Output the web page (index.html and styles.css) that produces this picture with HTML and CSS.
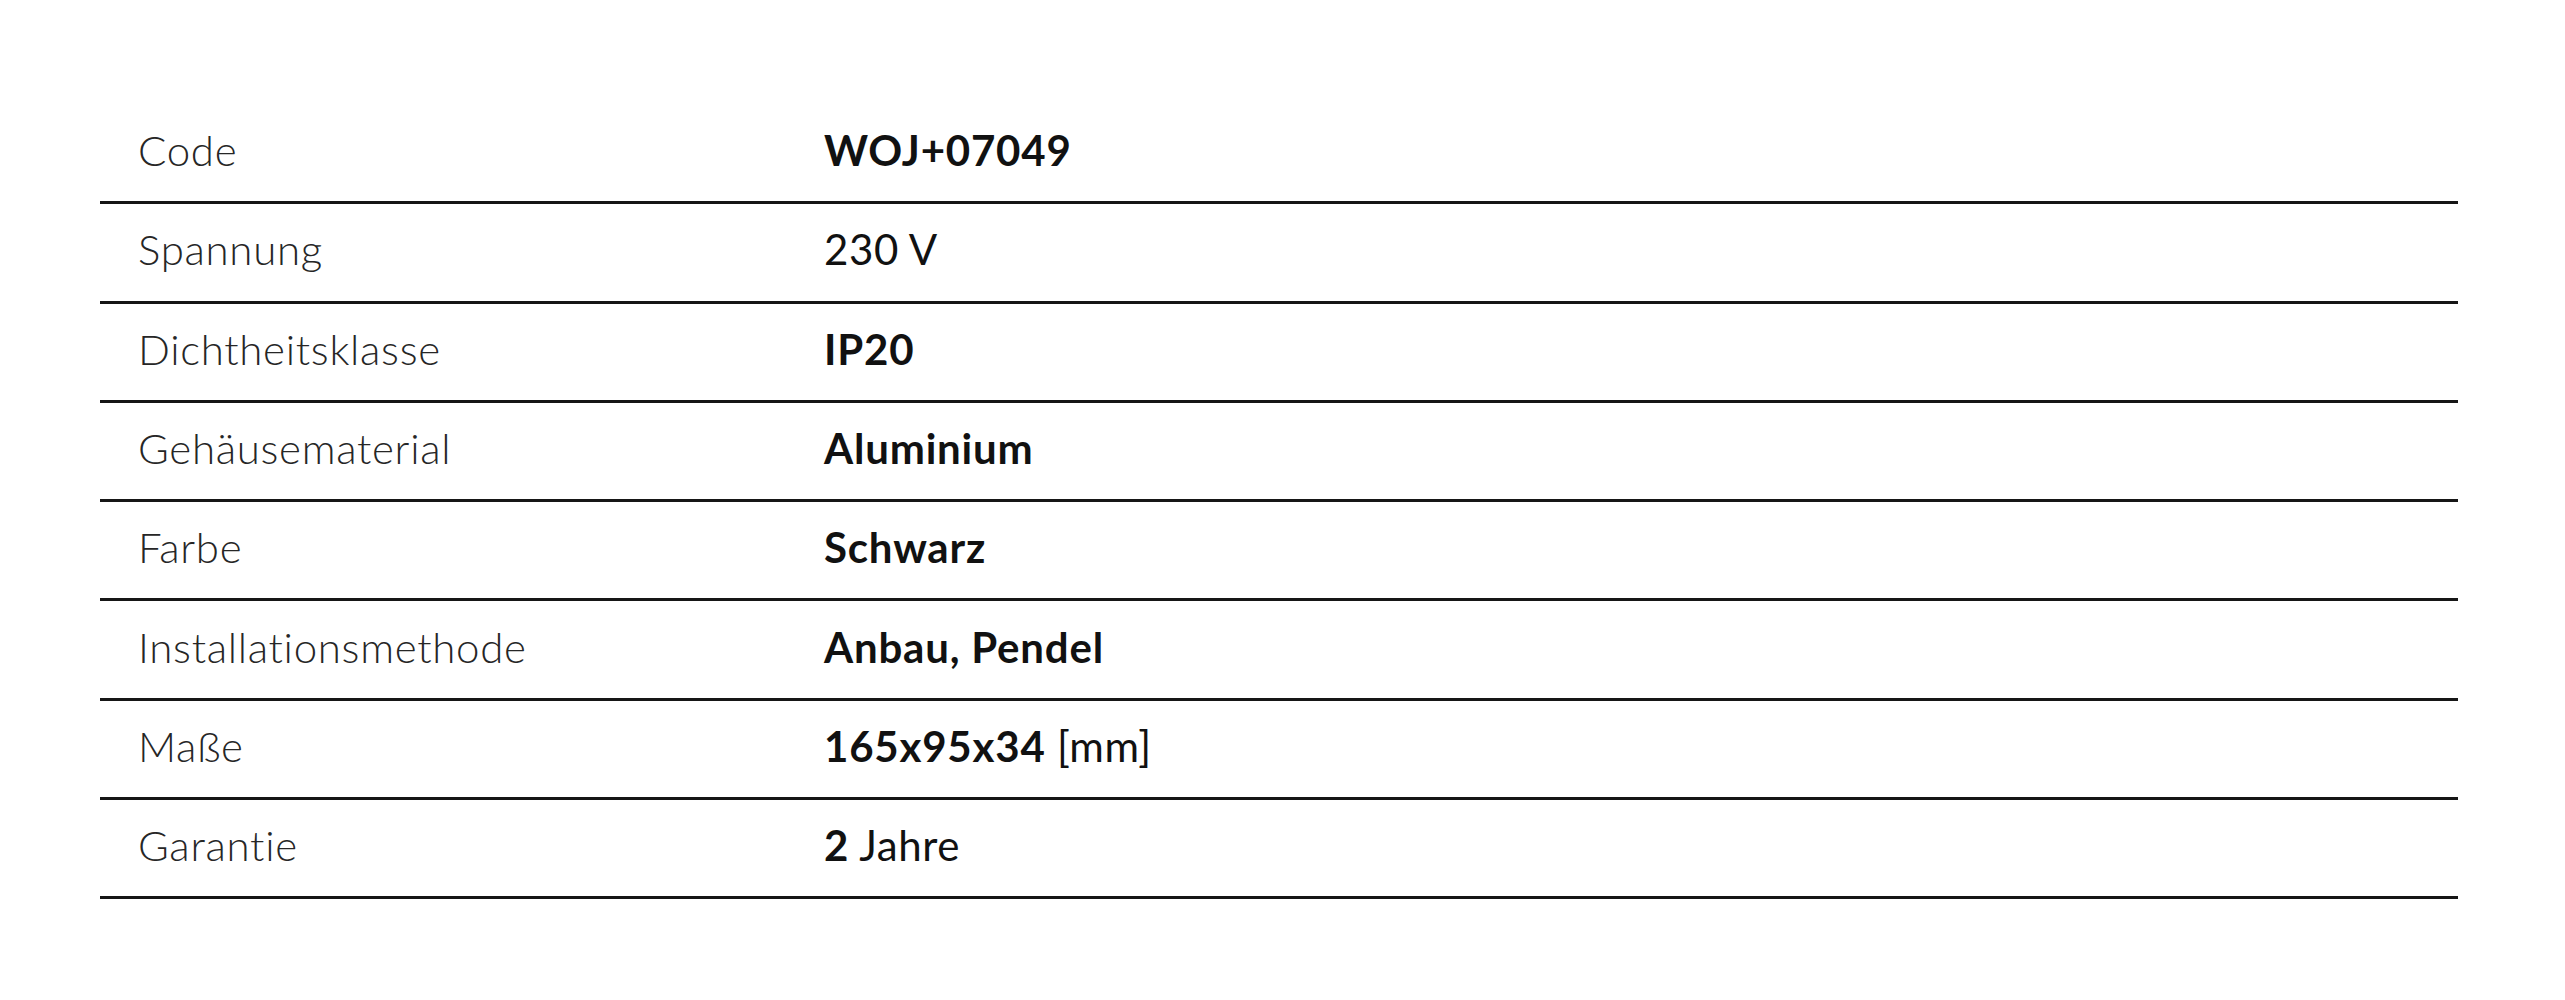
FILE: index.html
```html
<!DOCTYPE html>
<html lang="de">
<head>
<meta charset="utf-8">
<title>Technische Daten</title>
<link rel="stylesheet" href="styles.css">
</head>
<body>
<div class="page">
  <div class="specs">
    <div class="row"><div class="label">Code</div><div class="value"><b>WOJ+07049</b></div></div>
    <div class="row"><div class="label">Spannung</div><div class="value">230 V</div></div>
    <div class="row"><div class="label">Dichtheitsklasse</div><div class="value"><b>IP20</b></div></div>
    <div class="row"><div class="label">Gehäusematerial</div><div class="value"><b>Aluminium</b></div></div>
    <div class="row"><div class="label">Farbe</div><div class="value"><b>Schwarz</b></div></div>
    <div class="row"><div class="label">Installationsmethode</div><div class="value"><b>Anbau, Pendel</b></div></div>
    <div class="row"><div class="label">Maße</div><div class="value"><b>165x95x34</b> [mm]</div></div>
    <div class="row"><div class="label">Garantie</div><div class="value"><b>2</b> Jahre</div></div>
  </div>
</div>
</body>
</html>
```

FILE: styles.css
```css
html, body {
  margin: 0;
  padding: 0;
  background: #ffffff;
}

.page {
  padding: 105px 107px 0 100px;
  font-family: "Lato", "Liberation Sans", sans-serif;
  font-size: 42px;
}

.specs {
  display: flex;
  flex-direction: column;
}

.row {
  box-sizing: border-box;
  display: grid;
  grid-template-columns: 686px 1fr;
  align-items: center;
  height: 99.3px;
  border-bottom: 3px solid #161616;
  padding: 0 0 6px 38px;
}

.label {
  font-weight: 300;
  color: #262626;
  letter-spacing: 0.7px;
}

.value {
  font-weight: 400;
  color: #111111;
  letter-spacing: 0.6px;
}

.value b {
  font-weight: 700;
  letter-spacing: 0.8px;
}
```
